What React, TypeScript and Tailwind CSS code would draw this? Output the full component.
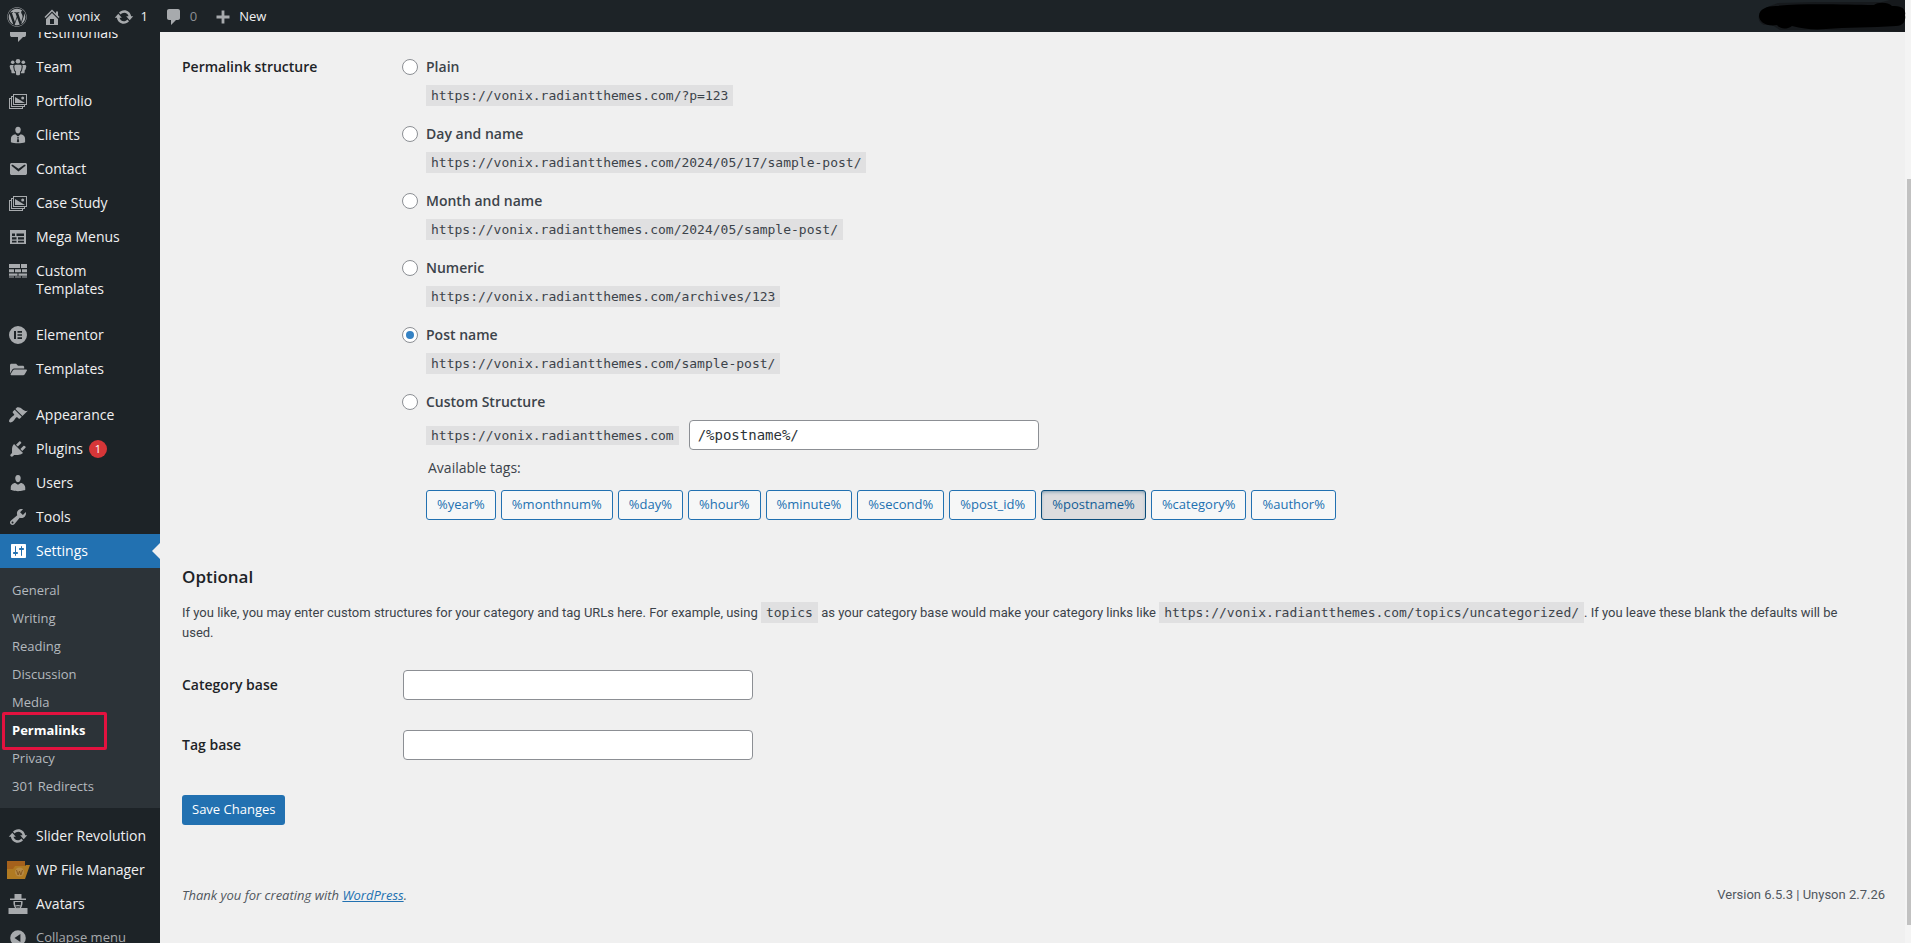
import { useState, ReactNode } from "react";
import { FaFolderOpen, FaWordpress } from "react-icons/fa";

interface IconProps {
  size?: number;
  children: ReactNode;
}

function Icon({ size = 20, children }: IconProps) {
  return (
    <svg width={size} height={size} viewBox="0 0 20 20" fill="currentColor" fillRule="evenodd" aria-hidden="true">
      {children}
    </svg>
  );
}

const icons = {
  home: <path d="M16 8.5l1.53 1.53-1.06 1.06L10 4.6l-6.47 6.49-1.06-1.06L10 2.5l4 4v-2h2v4zm-6-2.46l6 5.99V18H4v-5.97zM12 17v-5H8v5h4z" />,
  update: (
    <path d="M10.2 3.28c3.53 0 6.43 2.61 6.92 6h2.08l-3.5 4-3.5-4h2.32c-.45-1.97-2.21-3.45-4.32-3.45-1.45 0-2.73.71-3.54 1.78L4.95 5.66C6.23 4.2 8.11 3.28 10.2 3.28zm-.4 13.44c-3.52 0-6.43-2.61-6.92-6H.8l3.5-4c1.17 1.33 2.33 2.67 3.5 4H5.48c.45 1.97 2.21 3.45 4.32 3.45 1.45 0 2.73-.71 3.54-1.78l1.71 1.95c-1.28 1.46-3.15 2.38-5.25 2.38z" />
  ),
  comment: <path d="M5 2h9c1.1 0 2 .9 2 2v7c0 1.1-.9 2-2 2h-2l-5 5v-5H5c-1.1 0-2-.9-2-2V4c0-1.1.9-2 2-2z" />,
  plus: <path d="M8.6 3.5h2.8v5.1h5.1v2.8h-5.1v5.1H8.6v-5.1H3.5V8.6h5.1z" />,
  testimonial: <path d="M4 3h12c.55 0 1.02.2 1.41.59S18 4.45 18 5v7c0 .55-.2 1.02-.59 1.41S16.55 14 16 14h-1l-5 5v-5H4c-.55 0-1.02-.2-1.41-.59S2 12.55 2 12V5c0-.55.2-1.02.59-1.41S3.45 3 4 3z" />,
  groups: (
    <>
      <circle cx="10" cy="4.3" r="2.3" />
      <circle cx="4.7" cy="5.2" r="1.8" />
      <circle cx="15.3" cy="5.2" r="1.8" />
      <path d="M7.7 7.8h4.6c1 0 1.5.9 1.4 1.9l-.6 3.8-.9.5-.3 3.5c-.1.5-.5.7-1 .7H9.1c-.5 0-.9-.2-1-.7L7.8 14l-.9-.5-.6-3.8c-.1-1 .4-1.9 1.4-1.9z" />
      <path d="M5.8 8C5 9 5.3 10 5.5 11l.6 3.3.9.5.2 1.500H4.300c-.4 0-.7-.2-.8-.6l-.3-2.800-.8-.5-.7-2.900C1.500 8.600 2.200 8 3.200 8z" />
      <path d="M14.200 8c.8 1 .5 2 .3 3l-.6 3.300-.9.500-.2 1.500h2.900c.4 0 .7-.2.800-.6l.3-2.800.8-.5.7-2.900c.2-.9-.5-1.500-1.500-1.500z" />
    </>
  ),
  images: (
    <>
      <path d="M5 3h14v11h-2v2h-2v2H1V7h2V5h2zM18 13V4H6v9zM14 17v-1H3V8H2v9zM16 15v-1H5V6H4v9z" />
      <path d="M7 6l10 6H7z" />
      <circle cx="14.700" cy="7" r="1.500" />
    </>
  ),
  businessman: (
    <>
      <path d="M10 8.500c-1.900 0-2.700-2-2.700-3.900C7.300 2.900 8.400 1.800 10 1.800s2.700 1.100 2.700 2.800c0 1.900-.8 3.900-2.700 3.900z" />
      <path d="M7.300 9.300L10 11.500l2.700-2.200c2.500.2 4.400 2 4.400 4.700v3.200c-1.800.6-4.400 1-7.100 1s-5.300-.4-7.100-1V14c0-2.700 1.900-4.500 4.400-4.700zM9.100 12l.5 1.200-.8 3.300 1.200 1 1.200-1-.8-3.300.5-1.200z" />
    </>
  ),
  email: (
    <path d="M3.870 4h13.250C18.370 4 19 4.590 19 5.790v8.420c0 1.190-.63 1.790-1.880 1.790H3.870c-1.250 0-1.880-.6-1.880-1.790V5.790c0-1.200.63-1.790 1.880-1.790zm6.620 8.600l6.740-5.530c.24-.2.43-.66.13-1.070-.29-.41-.82-.42-1.170-.17l-5.700 3.860L4.800 5.830c-.35-.25-.88-.24-1.170.17-.3.410-.11.870.13 1.070z" />
  ),
  table: <path d="M2 3h16v14H2zM4 6.500V9h3V6.500zM8.500 6.500V9H16V6.500zM4 10.300v2.200h4.500v-2.200zM10 10.300v2.200h6v-2.200zM4 13.700v1.900h4.500v-1.900zM10 13.700v1.900h6v-1.900z" />,
  bricks: (
    <path d="M1 3h11v4H1zM13 3h6v4h-6zM1 8.300h5v3H1zM7 8.300h6v3H7zM14 8.300h5v3h-5zM1 12.500h8.500v2.200H1zM10.500 12.500H19v2.200h-8.500zM1 15.600h5v1H1zM7 15.600h6v1H7zM14 15.600h5v1h-5z" />
  ),
  elementor: <path d="M10 1a9 9 0 1 0 0 18 9 9 0 0 0 0-18zM6 6h2v8H6zM9.500 6H14v1.700H9.500zM9.500 9.150H14v1.700H9.500zM9.500 12.300H14V14H9.500z" />,
  appearance: (
    <path d="M14.480 11.060L7.410 3.990l1.500-1.500c.5-.56 2.300-.47 3.510.32 1.210.8 1.430 1.280 2.910 2.100 1.180.64 2.450 1.260 4.450.85zm-.71.710L6.700 4.700 4.930 6.470c-.39.390-.39 1.020 0 1.410l1.060 1.060c.39.390.39 1.030 0 1.420-.6.600-1.430 1.110-2.210 1.690-.35.260-.7.530-1.010.84C1.430 14.230.4 16.080 1.400 17.070c.99 1 2.840-.03 4.180-1.360.31-.31.58-.66.85-1.020.57-.78 1.080-1.610 1.690-2.210.39-.39 1.020-.39 1.410 0l1.060 1.060c.39.390 1.020.390 1.410 0z" />
  ),
  plugins: (
    <path d="M13.110 4.360L9.870 7.600 8 5.730l3.240-3.240c.35-.34 1.050-.2 1.560.32.52.510.66 1.210.31 1.550zm-8 1.770l.91-1.120 9.010 9.010-1.190.84c-.71.710-2.630 1.160-3.820 1.160H6.140L4.900 17.260c-.59.590-1.540.590-2.120 0-.59-.58-.59-1.530 0-2.120l1.240-1.240v-3.880c0-1.130.4-3.190 1.090-3.890zm7.260 3.970l3.240-3.240c.34-.35 1.040-.21 1.550.31.52.510.66 1.210.31 1.550l-3.240 3.250z" />
  ),
  users: (
    <path d="M10 9.250c-2.270 0-2.730-3.440-2.730-3.440C7 4.020 7.820 2 9.970 2c2.160 0 2.980 2.020 2.710 3.810 0 0-.41 3.440-2.680 3.440zm0 2.570L12.720 10c2.390 0 4.520 2.330 4.520 4.530v2.490s-3.650 1.130-7.240 1.130c-3.650 0-7.240-1.130-7.240-1.130v-2.490c0-2.250 1.940-4.480 4.470-4.480z" />
  ),
  tools: (
    <path d="M16.680 9.770c-1.340 1.340-3.300 1.670-4.950.99l-5.410 6.520c-.99.990-2.590.990-3.580 0s-.99-2.590 0-3.570l6.520-5.420c-.68-1.650-.35-3.610.99-4.950 1.280-1.280 3.120-1.620 4.720-1.060l-2.890 2.890 2.820 2.820 2.860-2.870c.53 1.580.18 3.390-1.080 4.650zM3.810 16.210c.4.390 1.040.390 1.430 0 .4-.4.4-1.040 0-1.430-.39-.4-1.030-.4-1.430 0-.39.390-.39 1.030 0 1.430z" />
  ),
  settings: (
    <path d="M18 16V4c0-.55-.45-1-1-1H4c-.55 0-1 .45-1 1v12c0 .55.45 1 1 1h13c.55 0 1-.45 1-1zM8 11h1c.55 0 1 .45 1 1s-.45 1-1 1H8v1.500c0 .28-.22.5-.5.5s-.5-.22-.5-.5V13H6c-.55 0-1-.45-1-1s.45-1 1-1h1V5.500c0-.28.22-.5.5-.5s.5.22.5.5V11zm5-2h-1c-.55 0-1-.45-1-1s.45-1 1-1h1V5.500c0-.28.22-.5.5-.5s.5.22.5.5V7h1c.55 0 1 .45 1 1s-.45 1-1 1h-1v5.500c0 .28-.22.5-.5.5s-.5-.22-.5-.5V9z" />
  ),
  avatars: (
    <>
      <path d="M6.500 0h7v4.500H18V6H2V4.500h4.500z" />
      <path d="M5.500 7h9c.3 2.700-.2 5.200-1.500 7h6.500v6H.5v-6H7c-1.300-1.800-1.800-4.300-1.500-7zM7 8c-.1 3.500 1 6.500 3 6.500S13.100 11.500 13 8z" />
      <path d="M7 11.500c1.500-.8 4.500-.8 6 0l-1 1c-1.200-.5-2.800-.5-4 0zM9.200 13.500h1.600V15H9.200z" />
    </>
  ),
  collapse: <path d="M10 2.200a7.800 7.800 0 1 0 0 15.600 7.800 7.800 0 0 0 0-15.600zM12.400 6v8L6.500 10z" />,
};

function FileManagerIcon() {
  return (
    <svg width="23" height="20" viewBox="0 0 23 20" className="shrink-0" aria-hidden="true">
      <path d="M0 1h18v18H0z" fill="#a5611c" />
      <path d="M0 9h6l2-3h10l1-1h4l-5 14H0z" fill="#b07a22" />
      <circle cx="12.500" cy="12" r="4.500" fill="#b78a45" />
      <path d="M9.500 10l1.700 5 1.300-4 1.300 4 1.700-5" fill="none" stroke="#8a5a20" strokeWidth="1" />
    </svg>
  );
}

interface MenuEntry {
  label: string;
  icon: ReactNode;
  badge?: string;
  current?: boolean;
}

const glyph = (name: keyof typeof icons) => <Icon>{icons[name]}</Icon>;

const contentMenu: MenuEntry[] = [
  { label: "Testimonials", icon: glyph("testimonial") },
  { label: "Team", icon: glyph("groups") },
  { label: "Portfolio", icon: glyph("images") },
  { label: "Clients", icon: glyph("businessman") },
  { label: "Contact", icon: glyph("email") },
  { label: "Case Study", icon: glyph("images") },
  { label: "Mega Menus", icon: glyph("table") },
  { label: "Custom Templates", icon: glyph("bricks") },
];

const builderMenu: MenuEntry[] = [
  { label: "Elementor", icon: glyph("elementor") },
  { label: "Templates", icon: <FaFolderOpen size={17} /> },
];

const adminMenu: MenuEntry[] = [
  { label: "Appearance", icon: glyph("appearance") },
  { label: "Plugins", icon: glyph("plugins"), badge: "1" },
  { label: "Users", icon: glyph("users") },
  { label: "Tools", icon: glyph("tools") },
  { label: "Settings", icon: glyph("settings"), current: true },
];

const pluginMenu: MenuEntry[] = [
  { label: "Slider Revolution", icon: glyph("update") },
  { label: "WP File Manager", icon: <FileManagerIcon /> },
  { label: "Avatars", icon: glyph("avatars") },
];

const settingsMenu = ["General", "Writing", "Reading", "Discussion", "Media", "Permalinks", "Privacy", "301 Redirects"];

const siteUrl = "https://vonix.radiantthemes.com";

const structures = [
  { id: "plain", label: "Plain", example: "/?p=123" },
  { id: "day-name", label: "Day and name", example: "/2024/05/17/sample-post/" },
  { id: "month-name", label: "Month and name", example: "/2024/05/sample-post/" },
  { id: "numeric", label: "Numeric", example: "/archives/123" },
  { id: "post-name", label: "Post name", example: "/sample-post/" },
];

const tags = ["year", "monthnum", "day", "hour", "minute", "second", "post_id", "postname", "category", "author"];

function MenuItem({ label, icon, badge, current }: MenuEntry) {
  return (
    <li>
      <a
        href="#"
        className={`relative flex text-sm leading-[18px] ${current ? "bg-[#2271b1] text-white" : "text-[#f0f0f1]"}`}
      >
        <span
          className={`flex h-[34px] w-9 shrink-0 items-center justify-center ${current ? "text-white" : "text-[#a7aaad]"}`}
        >
          {icon}
        </span>
        <span className="py-2 pr-2">
          {label}
          {badge && (
            <span className="ml-1.5 inline-flex h-[18px] w-[18px] items-center justify-center rounded-full bg-[#d63638] align-top text-[11px] text-white">
              {badge}
            </span>
          )}
        </span>
        {current && (
          <span className="absolute top-1/2 right-0 -translate-y-1/2 border-8 border-transparent border-r-[#f0f0f0]" />
        )}
      </a>
    </li>
  );
}

function Menu({ entries }: { entries: MenuEntry[] }) {
  return (
    <ul>
      {entries.map((entry) => (
        <MenuItem key={entry.label} {...entry} />
      ))}
    </ul>
  );
}

function Code({ children }: { children: ReactNode }) {
  return (
    <code className="bg-[#e0e0e1] px-[5px] py-[3px] font-['DejaVu_Sans_Mono',monospace] text-[13px] leading-none text-[#3c434a]">
      {children}
    </code>
  );
}

function Radio({ id, checked, onChange }: { id: string; checked: boolean; onChange: () => void }) {
  return (
    <input
      type="radio"
      id={id}
      name="structure"
      checked={checked}
      onChange={onChange}
      className="grid size-4 shrink-0 appearance-none place-content-center rounded-full border border-[#8c8f94] bg-white before:size-2 before:rounded-full checked:before:bg-[#3582c4]"
    />
  );
}

function AdminBar() {
  return (
    <header className="relative flex h-8 shrink-0 items-center bg-[#1d2327] pt-0.5 pl-[7px] text-[13px] text-[#f0f0f1]">
      <a href="#" aria-label="About WordPress" className="text-[#a7aaad]">
        <FaWordpress size={20} />
      </a>
      <a href="#" className="ml-[15px] flex items-center gap-1.5">
        <span className="text-[#a7aaad]">{glyph("home")}</span>
        vonix
      </a>
      <a href="#" className="ml-3.5 flex items-center gap-1.5">
        <span className="text-[#a7aaad]">{glyph("update")}</span>1
      </a>
      <a href="#" className="ml-4 flex items-center gap-1.5 text-[#8c8f94]">
        <span className="text-[#a7aaad]">{glyph("comment")}</span>0
      </a>
      <a href="#" className="ml-4 flex items-center gap-1.5">
        <span className="text-[#a7aaad]">{glyph("plus")}</span>
        New
      </a>
      <svg className="absolute top-0 -right-px" width="150" height="32" viewBox="0 0 150 32" aria-hidden="true">
        <path d="M14 6L22 3 60 2h66l8-2h15v32l-24-1-60-1H24l-8-5H8C0 22 0 12 14 6z" fill="#16191c" />
        <path d="M20 6c30-3 70-1 98-1 4-3 14-3 18 1 12-1 14 5 13 9 1 5-1 11-9 11-25 2-50 1-70 3-12 1-22 0-34-3-6 4-12 3-15-1-10 2-18-3-18-9 0-7 8-10 17-10z" fill="#000" />
      </svg>
    </header>
  );
}

function Sidebar() {
  return (
    <nav aria-label="Main menu" className="w-40 shrink-0 overflow-hidden bg-[#1d2327]">
      <div className="-mt-4">
        <Menu entries={contentMenu} />
        <div className="h-3" />
        <Menu entries={builderMenu} />
        <div className="h-3" />
        <Menu entries={adminMenu} />
        <ul className="bg-[#2c3338] py-2 text-[13px] leading-[18px]">
          {settingsMenu.map((label) =>
            label === "Permalinks" ? (
              <li key={label} className="relative">
                <a href="#" className="block px-3 py-[5px] font-bold text-white">
                  {label}
                </a>
                <span className="pointer-events-none absolute -top-1 left-0.5 h-[38px] w-[105px] rounded-xs border-3 border-[#e3123f]" />
              </li>
            ) : (
              <li key={label}>
                <a href="#" className="block px-3 py-[5px] text-[#b4b9be]">
                  {label}
                </a>
              </li>
            ),
          )}
        </ul>
        <div className="h-[11px]" />
        <Menu entries={pluginMenu} />
        <button type="button" className="flex h-[34px] w-full items-center text-[13px] text-[#a7aaad]">
          <span className="flex w-9 justify-center">{glyph("collapse")}</span>
          Collapse menu
        </button>
      </div>
    </nav>
  );
}

const fieldClass = "h-[30px] w-[350px] rounded-sm border border-[#8c8f94] bg-white px-2 text-sm text-[#2c3338]";

export default function App() {
  const [structure, setStructure] = useState("post-name");
  const [custom, setCustom] = useState("/%postname%/");
  const [category, setCategory] = useState("");
  const [tagBase, setTagBase] = useState("");

  const toggleTag = (tag: string) => {
    const part = `%${tag}%/`;
    setStructure("custom");
    setCustom(custom.includes(part) ? custom.replace(part, "") : custom + part);
  };

  return (
    <div className="flex h-screen overflow-hidden bg-[#f0f0f0] font-['Open_Sans',sans-serif] text-[13px] text-[#3c434a]">
      <div className="flex min-w-0 flex-1 flex-col">
        <AdminBar />
        <div className="flex min-h-0 flex-1">
          <Sidebar />

          <main className="flex min-w-0 flex-1 flex-col pr-5 pl-[22px]">
            {/* Permalink structure */}
            <div className="flex pt-[25px]">
              <h3 className="w-[220px] shrink-0 text-sm leading-5 font-semibold text-[#1d2327]">Permalink structure</h3>
              <div role="radiogroup" aria-label="Permalink structure" className="flex flex-col gap-[19px]">
                {structures.map(({ id, label, example }) => (
                  <div key={id} className="flex gap-2">
                    <span className="pt-0.5">
                      <Radio id={id} checked={structure === id} onChange={() => setStructure(id)} />
                    </span>
                    <div>
                      <label htmlFor={id} className="block text-sm leading-5 font-semibold">
                        {label}
                      </label>
                      <p className="mt-2 leading-5">
                        <Code>{siteUrl + example}</Code>
                      </p>
                    </div>
                  </div>
                ))}

                <div className="flex gap-2">
                  <span className="pt-0.5">
                    <Radio id="custom" checked={structure === "custom"} onChange={() => setStructure("custom")} />
                  </span>
                  <div>
                    <label htmlFor="custom" className="block text-sm leading-5 font-semibold">
                      Custom Structure
                    </label>
                    <div className="mt-2 flex items-center gap-[10px]">
                      <Code>{siteUrl}</Code>
                      <input
                        type="text"
                        aria-label="Custom Structure"
                        value={custom}
                        onChange={(e) => setCustom(e.target.value)}
                        className={`${fieldClass} font-['DejaVu_Sans_Mono',monospace]`}
                      />
                    </div>
                    <p className="mt-2 pl-0.5 text-sm leading-5">Available tags:</p>
                    <div className="mt-3 flex flex-wrap gap-[5px]">
                      {tags.map((tag) => {
                        const active = custom.includes(`%${tag}%`);
                        return (
                          <button
                            key={tag}
                            type="button"
                            aria-pressed={active}
                            onClick={() => toggleTag(tag)}
                            className={`h-[30px] rounded-[3px] border px-[10px] text-[13px] ${
                              active
                                ? "border-[#0a4b78] bg-[#dcdcde] text-[#135e96] inset-shadow-[0_2px_5px_-3px_#0a4b78]"
                                : "border-[#2271b1] bg-[#f6f7f7] text-[#2271b1]"
                            }`}
                          >
                            {`%${tag}%`}
                          </button>
                        );
                      })}
                    </div>
                  </div>
                </div>
              </div>
            </div>

            {/* Optional bases */}
            <h2 className="mt-[45px] text-[17px] leading-6 font-semibold text-[#1d2327]">Optional</h2>
            <p className="mt-3.5 pr-8 font-['Roboto',sans-serif] leading-5">
              If you like, you may enter custom structures for your category and tag URLs here. For example, using{" "}
              <Code>topics</Code> as your category base would make your category links like{" "}
              <Code>{`${siteUrl}/topics/uncategorized/`}</Code>. If you leave these blank the defaults will be used.
            </p>
            <div className="mt-[27px] flex flex-col gap-[30px]">
              <div className="flex items-center">
                <label htmlFor="category-base" className="w-[221px] text-sm font-semibold text-[#1d2327]">
                  Category base
                </label>
                <input
                  type="text"
                  id="category-base"
                  value={category}
                  onChange={(e) => setCategory(e.target.value)}
                  className={fieldClass}
                />
              </div>
              <div className="flex items-center">
                <label htmlFor="tag-base" className="w-[221px] text-sm font-semibold text-[#1d2327]">
                  Tag base
                </label>
                <input
                  type="text"
                  id="tag-base"
                  value={tagBase}
                  onChange={(e) => setTagBase(e.target.value)}
                  className={fieldClass}
                />
              </div>
            </div>
            <button
              type="submit"
              className="mt-[35px] h-[30px] self-start rounded-[3px] bg-[#2271b1] px-[10px] text-[13px] text-white"
            >
              Save Changes
            </button>

            <footer className="mt-auto flex justify-between pb-[38px] leading-5 text-[#50575e]">
              <p className="italic">
                Thank you for creating with{" "}
                <a href="#" className="text-[#2271b1] underline">
                  WordPress
                </a>
                .
              </p>
              <p className="font-['Roboto',sans-serif]">Version 6.5.3 | Unyson 2.7.26</p>
            </footer>
          </main>
        </div>
      </div>

      {/* Scrollbar */}
      <div className="w-1.5 shrink-0 bg-[#f4f4f4] pt-[179px] pl-0.5">
        <div className="h-[746px] bg-[#c1c1c1]" />
      </div>
    </div>
  );
}
